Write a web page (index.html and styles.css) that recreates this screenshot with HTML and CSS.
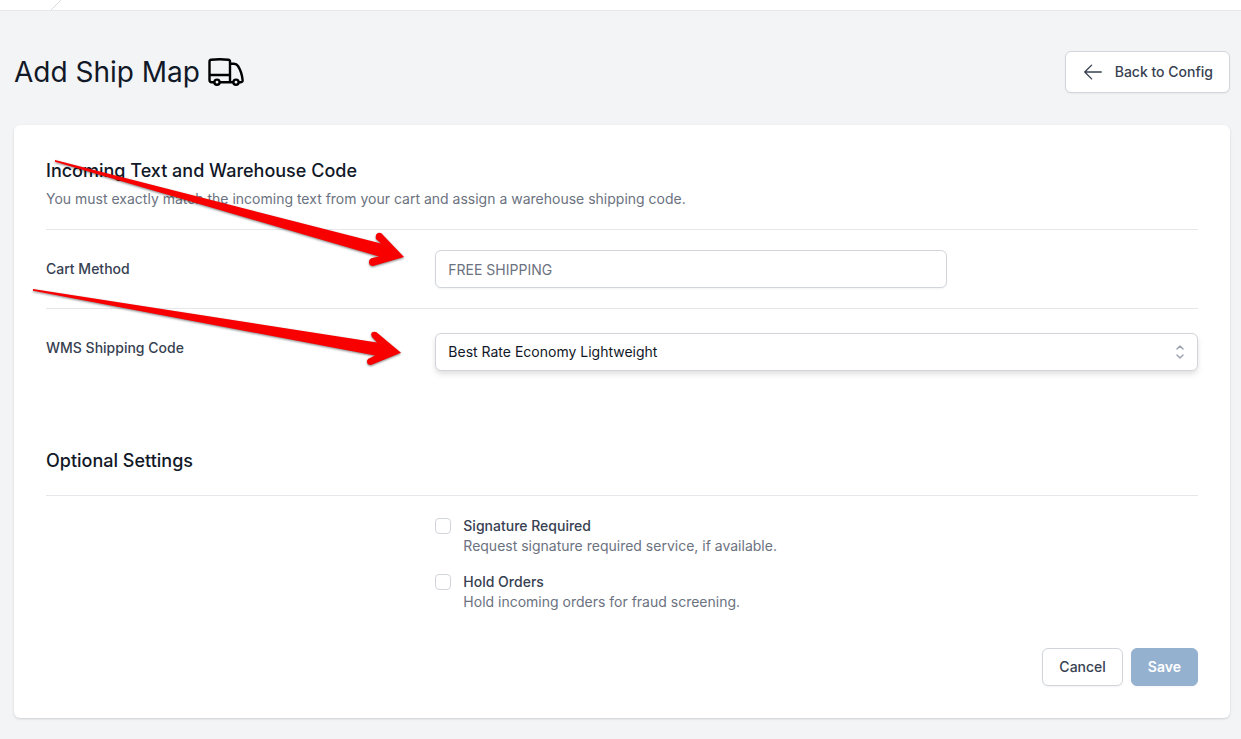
FILE: index.html
```html
<!DOCTYPE html>
<html lang="en">
<head>
    <meta charset="UTF-8">
    <meta name="viewport" content="width=device-width, initial-scale=1.0">
    <title>Add Ship Map</title>
    <link rel="stylesheet" href="styles.css">
</head>
<body>
    <nav class="breadcrumb" aria-label="Breadcrumb">
        <svg class="crumb-line" viewBox="0 0 16 10" fill="none" stroke="#d8dbe0" aria-hidden="true">
            <path d="M1 10L11 0"/>
        </svg>
    </nav>

    <main class="page">
        <header class="page-header">
            <h1 class="page-title">
                Add Ship Map
                <svg class="truck-icon" viewBox="0 0 36 28" fill="none" stroke="#000" stroke-width="2.4" stroke-linejoin="round" aria-hidden="true">
                    <path d="M6 24.200H3.500Q1.500 24.200 1.500 22V3.500Q1.500 2 3.200 1.800Q11.500 .8 20.300 1.800Q22 2 22 3.500V24.200H12M1.500 17H22M22 5.800H26Q28.500 5.800 30 8Q33.800 14 34.600 22Q34.800 24.200 33 24.200H31M22 24.200H25"/>
                    <circle cx="9" cy="24.200" r="2.600"/>
                    <circle cx="28" cy="24.200" r="2.600"/>
                </svg>
            </h1>
            <a class="btn btn-back" href="#">
                <svg class="back-icon" viewBox="0 0 24 24" fill="none" stroke="currentColor" stroke-width="1.5" stroke-linecap="round" stroke-linejoin="round" aria-hidden="true">
                    <path d="M10.500 19.500L3 12m0 0l7.500-7.500M3 12h18"/>
                </svg>
                Back to Config
            </a>
        </header>

        <form class="card">
            <section>
                <div class="section-head">
                    <h2 class="section-title">Incoming Text and Warehouse Code</h2>
                    <p class="hint">You must exactly match the incoming text from your cart and assign a warehouse shipping code.</p>
                </div>
                <div class="form-row">
                    <label class="row-label" for="cartMethod">Cart Method</label>
                    <div class="row-field">
                        <input class="text-input" type="text" id="cartMethod" placeholder="FREE SHIPPING">
                    </div>
                </div>
                <div class="form-row">
                    <label class="row-label" for="shippingCode">WMS Shipping Code</label>
                    <div class="row-field select-wrap">
                        <select class="select-input" id="shippingCode">
                            <option>Best Rate Economy Lightweight</option>
                        </select>
                        <svg class="select-icon" viewBox="0 0 20 20" fill="none" stroke="#9ca3af" stroke-width="1.5" stroke-linecap="round" stroke-linejoin="round" aria-hidden="true">
                            <path d="M7 7l3-3 3 3m0 6l-3 3-3-3"/>
                        </svg>
                    </div>
                </div>
            </section>

            <section class="optional">
                <div class="section-head">
                    <h2 class="section-title">Optional Settings</h2>
                </div>
                <div class="form-row">
                    <div class="row-field check-list">
                        <div class="check-item">
                            <input class="checkbox" type="checkbox" id="signature">
                            <div>
                                <label class="check-label" for="signature">Signature Required</label>
                                <p class="hint">Request signature required service, if available.</p>
                            </div>
                        </div>
                        <div class="check-item">
                            <input class="checkbox" type="checkbox" id="hold">
                            <div>
                                <label class="check-label" for="hold">Hold Orders</label>
                                <p class="hint">Hold incoming orders for fraud screening.</p>
                            </div>
                        </div>
                    </div>
                </div>
            </section>

            <div class="actions">
                <button class="btn" type="button">Cancel</button>
                <button class="btn btn-save" type="submit" disabled>Save</button>
            </div>

            <!-- arrows pointing at the two fields -->
            <svg class="arrows" viewBox="0 0 400 250" fill="#f90000" aria-hidden="true">
                <path d="M41 35L367 118.500L362 114Q361 109 364 108Q367 107 369 110L390 132L359 141Q355 141 355 137Q355 134 358 133L365 131.500L41 36.800Z"/>
                <path d="M19 164L363 217.500L358 212Q356 208 359 207Q362 206 364 208.500L387 227.700L357 240Q353 240 353 236.500Q353 234 356 233L361 230.500L19 165.800Z"/>
            </svg>
        </form>
    </main>
</body>
</html>
```

FILE: styles.css
```css
* {
    box-sizing: border-box;
}
body {
    margin: 0;
    min-height: 100vh;
    background-color: #f3f4f6;
    color: #111827;
    font-family: Inter, "Liberation Sans", sans-serif;
    font-size: 14px;
    line-height: 20px;
}
h1, h2, p {
    margin: 0;
}
.breadcrumb {
    height: 11px;
    padding-left: 50px;
    background-color: #fff;
    border-bottom: 1px solid #e5e7eb;
}
.crumb-line {
    display: block;
    width: 16px;
    height: 10px;
}
.page {
    padding: 40px 11px 20px 14px;
}
.page-header {
    display: flex;
    justify-content: space-between;
    align-items: center;
    margin-bottom: 32px;
}
.page-title {
    display: flex;
    align-items: center;
    gap: 8px;
    font-size: 28px;
    line-height: 36px;
    font-weight: 400;
}
.truck-icon {
    width: 36px;
    height: 28px;
}
.btn {
    display: inline-flex;
    align-items: center;
    padding: 8px 16px;
    border: 1px solid #d1d5db;
    border-radius: 6px;
    background-color: #fff;
    color: #374151;
    font: inherit;
    font-weight: 500;
    text-decoration: none;
    box-shadow: 0 1px 2px rgba(0, 0, 0, 0.05);
}
.btn-back {
    gap: 11px;
    padding: 10px 16px;
}
.back-icon {
    width: 22px;
    height: 22px;
    margin: -1px 0;
}
.btn-save {
    border-color: #94b1cf;
    background-color: #94b1cf;
    color: #fff;
    font-weight: 600;
}
.card {
    position: relative;
    padding: 32px;
    border-radius: 6px;
    background-color: #fff;
    box-shadow: 0 1px 3px rgba(0, 0, 0, 0.1), 0 1px 2px rgba(0, 0, 0, 0.06);
}
.section-head {
    padding-bottom: 20px;
}
.section-title {
    font-size: 18px;
    line-height: 28px;
    font-weight: 500;
}
.hint {
    color: #6b7280;
}
.section-title + .hint {
    margin-top: 4px;
}
.form-row {
    display: grid;
    grid-template-columns: repeat(3, 1fr);
    column-gap: 16px;
    padding: 20px 0;
    border-top: 1px solid #e5e7eb;
}
.row-label {
    padding-top: 9px;
    color: #374151;
    font-weight: 500;
}
.row-field {
    grid-column: 2 / 4;
}
.text-input, .select-input {
    display: block;
    width: 100%;
    height: 38px;
    padding: 8px 12px;
    border: 1px solid #d1d5db;
    border-radius: 6px;
    background-color: #fff;
    color: #111827;
    font: inherit;
}
.text-input {
    max-width: 512px;
    box-shadow: 0 1px 2px rgba(0, 0, 0, 0.05);
}
.text-input::placeholder {
    color: #6b7280;
}
.select-wrap {
    position: relative;
    padding-top: 4px;
}
.select-input {
    appearance: none;
    box-shadow: 0 4px 6px rgba(0, 0, 0, 0.08), 0 2px 4px rgba(0, 0, 0, 0.05);
}
.select-icon {
    position: absolute;
    right: 8px;
    bottom: 9px;
    width: 20px;
    height: 20px;
    pointer-events: none;
}
.optional {
    margin-top: 56px;
}
.check-list {
    display: grid;
    gap: 16px;
}
.check-item {
    display: flex;
    gap: 12px;
}
.checkbox {
    appearance: none;
    flex: none;
    width: 16px;
    height: 16px;
    margin: 2px 0 0;
    border: 1px solid #d1d5db;
    border-radius: 4px;
    background-color: #fff;
}
.checkbox:checked {
    background-color: #2b659f;
}
.check-label {
    display: block;
    color: #374151;
    font-weight: 500;
}
.actions {
    display: flex;
    justify-content: flex-end;
    gap: 8px;
    padding-top: 16px;
}
.arrows {
    position: absolute;
    top: 0;
    left: 0;
    width: 400px;
    height: 250px;
    filter: drop-shadow(0 1px 1px rgba(0, 0, 0, 0.5));
    pointer-events: none;
}
```
